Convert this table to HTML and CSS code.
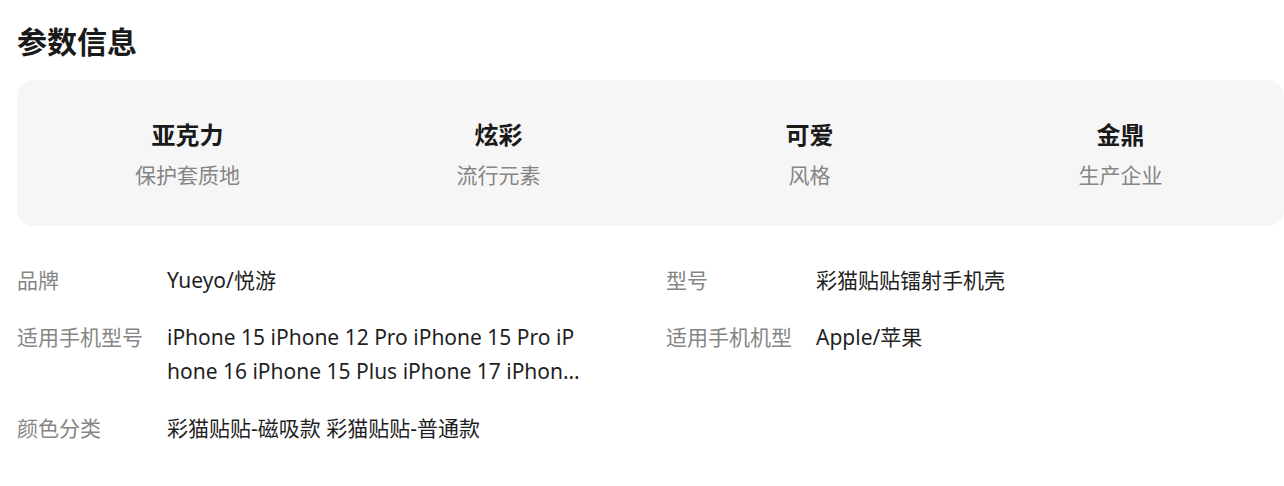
FILE: index.html
```html
<!DOCTYPE html>
<html lang="zh-CN">
<head>
    <meta charset="UTF-8">
    <meta name="viewport" content="width=device-width, initial-scale=1.0">
    <title>参数信息</title>
    <link rel="stylesheet" href="styles.css">
</head>
<body>
    <div class="params">
        <h2 class="params-title">参数信息</h2>

        <div class="highlights">
            <div class="highlight">
                <div class="highlight-value">亚克力</div>
                <div class="highlight-label">保护套质地</div>
            </div>
            <div class="highlight">
                <div class="highlight-value">炫彩</div>
                <div class="highlight-label">流行元素</div>
            </div>
            <div class="highlight">
                <div class="highlight-value">可爱</div>
                <div class="highlight-label">风格</div>
            </div>
            <div class="highlight">
                <div class="highlight-value">金鼎</div>
                <div class="highlight-label">生产企业</div>
            </div>
        </div>

        <div class="spec-list">
            <div class="spec">
                <span class="spec-label">品牌</span>
                <span class="spec-value">Yueyo/悦游</span>
            </div>
            <div class="spec">
                <span class="spec-label">型号</span>
                <span class="spec-value">彩猫贴贴镭射手机壳</span>
            </div>
            <div class="spec">
                <span class="spec-label">适用手机型号</span>
                <span class="spec-value clamp">iPhone 15 iPhone 12 Pro iPhone 15 Pro iPhone 16 iPhone 15 Plus iPhone 17 iPhone 16 Pro iPhone 17 Pro Max</span>
            </div>
            <div class="spec">
                <span class="spec-label">适用手机机型</span>
                <span class="spec-value">Apple/苹果</span>
            </div>
            <div class="spec">
                <span class="spec-label">颜色分类</span>
                <span class="spec-value">彩猫贴贴-磁吸款 彩猫贴贴-普通款</span>
            </div>
        </div>
    </div>
</body>
</html>
```

FILE: styles.css
```css
body {
    margin: 0;
    font-family: "Noto Sans", "Noto Sans CJK SC", sans-serif;
    background-color: #fff;
    color: #1f1f1f;
}
.params {
    padding: 0 0 0 17px;
}
.params-title {
    margin: 0;
    padding-top: 23px;
    font-size: 30px;
    line-height: 38px;
    font-weight: 700;
    color: #1a1a1a;
}
.highlights {
    margin-top: 19px;
    display: grid;
    grid-template-columns: repeat(4, 311px);
    padding: 40px 0 36px 15px;
    background-color: #f6f6f6;
    border-radius: 16px;
}
.highlight {
    text-align: center;
}
.highlight-value {
    font-size: 24px;
    line-height: 30px;
    font-weight: 700;
    color: #1a1a1a;
}
.highlight-label {
    margin-top: 10px;
    font-size: 21px;
    line-height: 30px;
    color: #858585;
}
.spec-list {
    margin-top: 37px;
    display: grid;
    grid-template-columns: 649px 1fr;
    row-gap: 23px;
}
.spec {
    display: flex;
    align-items: flex-start;
}
.spec-label {
    flex: 0 0 150px;
    font-size: 21px;
    line-height: 34px;
    color: #858585;
}
.spec-value {
    max-width: 416px;
    font-size: 21px;
    line-height: 34px;
    color: #1f1f1f;
}
.clamp {
    display: -webkit-box;
    -webkit-line-clamp: 2;
    -webkit-box-orient: vertical;
    overflow: hidden;
    word-break: break-all;
}
```
